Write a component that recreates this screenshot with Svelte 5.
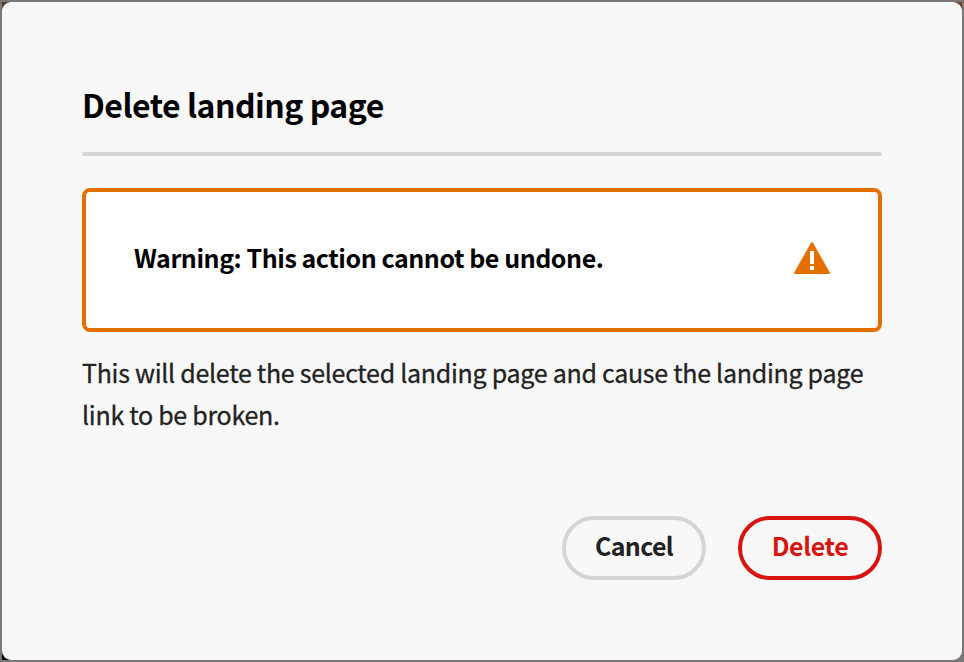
<script>
  const title = 'Delete landing page';
</script>

<div class="backdrop">
  <div class="dialog" role="alertdialog" aria-labelledby="title">
    <h1 id="title">{title}</h1>
    <div class="divider"></div>
    <div class="alert">
      <strong>Warning: This action cannot be undone.</strong>
      <svg width="36" height="32" viewBox="0 0 36 32" aria-hidden="true">
        <path fill="#e46f00" d="M17 .7Q18-.6 19 .7L35.8 30.6Q36.2 32 34.8 32H1.2Q-.2 32 .2 30.6Z" />
        <path fill="#fff" d="M16 9h4v13h-4zM16 24h4v4h-4z" />
      </svg>
    </div>
    <p>This will delete the selected landing page and cause the landing page<br />link to be broken.</p>
    <div class="actions">
      <button type="button">Cancel</button>
      <button type="button" class="negative">Delete</button>
    </div>
  </div>
</div>

<style>
  .backdrop {
    box-sizing: border-box;
    width: 964px;
    height: 662px;
    padding: 2px;
    background:
      linear-gradient(#5a3828, #5a3828) 2px 2px / 8px 8px no-repeat,
      linear-gradient(#734127, #734127) 954px 2px / 8px 8px no-repeat,
      linear-gradient(#000, #000) 2px 652px / 8px 8px no-repeat,
      #7b7776;
    font-family: "Noto Sans CJK SC", "Noto Sans", sans-serif;
  }
  .dialog {
    box-sizing: border-box;
    width: 960px;
    height: 658px;
    padding: 80px;
    border-radius: 9px;
    background: #f8f8f8;
    display: flex;
    flex-direction: column;
  }
  h1 {
    margin: 0;
    height: 70px;
    line-height: 44px;
    font-size: 32px;
    font-weight: 700;
    letter-spacing: -0.5px;
    color: #000;
    white-space: nowrap;
  }
  .divider {
    height: 4px;
    border-radius: 2px;
    background: #d5d5d5;
  }
  .alert {
    box-sizing: border-box;
    height: 144px;
    margin-top: 32px;
    padding: 0 48px 4px;
    border: 4px solid #e46f00;
    border-radius: 8px;
    background: #fff;
    display: flex;
    align-items: center;
    justify-content: space-between;
  }
  .alert strong {
    padding-bottom: 2px;
    font-size: 25px;
    line-height: 36px;
    font-weight: 700;
    letter-spacing: -0.45px;
    color: #000;
    white-space: nowrap;
  }
  .alert svg {
    display: block;
  }
  p {
    margin: 19px 0 0;
    font-size: 25px;
    line-height: 42px;
    letter-spacing: -0.28px;
    color: #222;
    -webkit-text-stroke: 0.3px #222;
    white-space: nowrap;
  }
  .actions {
    display: flex;
    justify-content: flex-end;
    gap: 32px;
    margin-top: auto;
  }
  button {
    box-sizing: border-box;
    width: 144px;
    height: 64px;
    padding: 0 0 6px;
    border: 4px solid #d5d5d5;
    border-radius: 32px;
    background: transparent;
    color: #222;
    font: 700 25px/50px "Noto Sans CJK SC", "Noto Sans", sans-serif;
    letter-spacing: -0.7px;
  }
  .negative {
    border-color: #d7150e;
    color: #d7150e;
    letter-spacing: -0.4px;
  }
</style>
